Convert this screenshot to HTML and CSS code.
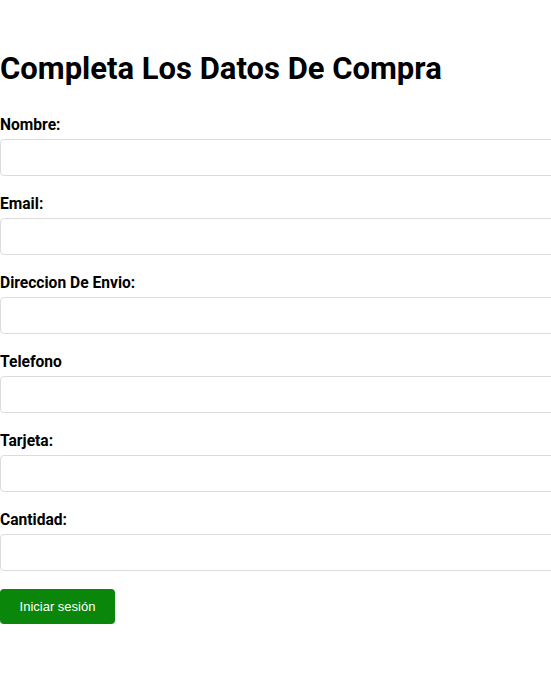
FILE: index.html
```html
<!DOCTYPE html>
<html lang="es">
<head>
<meta charset="utf-8">
<title>Completa Los Datos De Compra</title>
<link rel="stylesheet" href="styles.css">
</head>
<body>
<main class="page">
  <h1 class="title">Completa Los Datos De Compra</h1>
  <form class="form">
    <div class="field">
      <label class="label" for="nombre">Nombre:</label>
      <input class="input" id="nombre" type="text">
    </div>
    <div class="field">
      <label class="label" for="email">Email:</label>
      <input class="input" id="email" type="email">
    </div>
    <div class="field">
      <label class="label" for="dir">Direccion De Envio:</label>
      <input class="input" id="dir" type="text">
    </div>
    <div class="field">
      <label class="label" for="tel">Telefono</label>
      <input class="input" id="tel" type="text">
    </div>
    <div class="field">
      <label class="label" for="tarjeta">Tarjeta:</label>
      <input class="input" id="tarjeta" type="text">
    </div>
    <div class="field field-last">
      <label class="label" for="cantidad">Cantidad:</label>
      <input class="input" id="cantidad" type="text">
    </div>
    <button class="btn" type="button">Iniciar sesión</button>
  </form>
</main>
</body>
</html>
```
FILE: styles.css
```css
html, body {
  margin: 0;
  padding: 0;
  background: #fff;
  overflow-x: hidden;
}
body {
  font-family: Roboto, "Liberation Sans", sans-serif;
  color: #000;
}
.page {
  padding-top: 51px;
}
.title {
  margin: 0 0 29px;
  font-size: 31px;
  font-weight: 700;
  line-height: 36px;
}
.form {
  display: flex;
  flex-direction: column;
}
.field {
  display: flex;
  flex-direction: column;
  margin-bottom: 19px;
}
.field-last {
  margin-bottom: 18px;
}
.label {
  font-size: 15.6px;
  font-weight: 700;
  line-height: 19px;
  margin-bottom: 4px;
}
.input {
  box-sizing: border-box;
  width: calc(100% + 20px);
  height: 37px;
  margin: 0;
  padding: 6px 10px;
  border: 1px solid #dcdcdc;
  border-radius: 4px;
  background: #fff;
  font-size: 14px;
}
.btn {
  align-self: flex-start;
  width: 115px;
  height: 35px;
  margin: 0;
  padding: 0;
  border: none;
  border-radius: 4px;
  background: #0a870a;
  color: #fff;
  font-family: "Liberation Sans", Arial, sans-serif;
  font-size: 13px;
}
```
